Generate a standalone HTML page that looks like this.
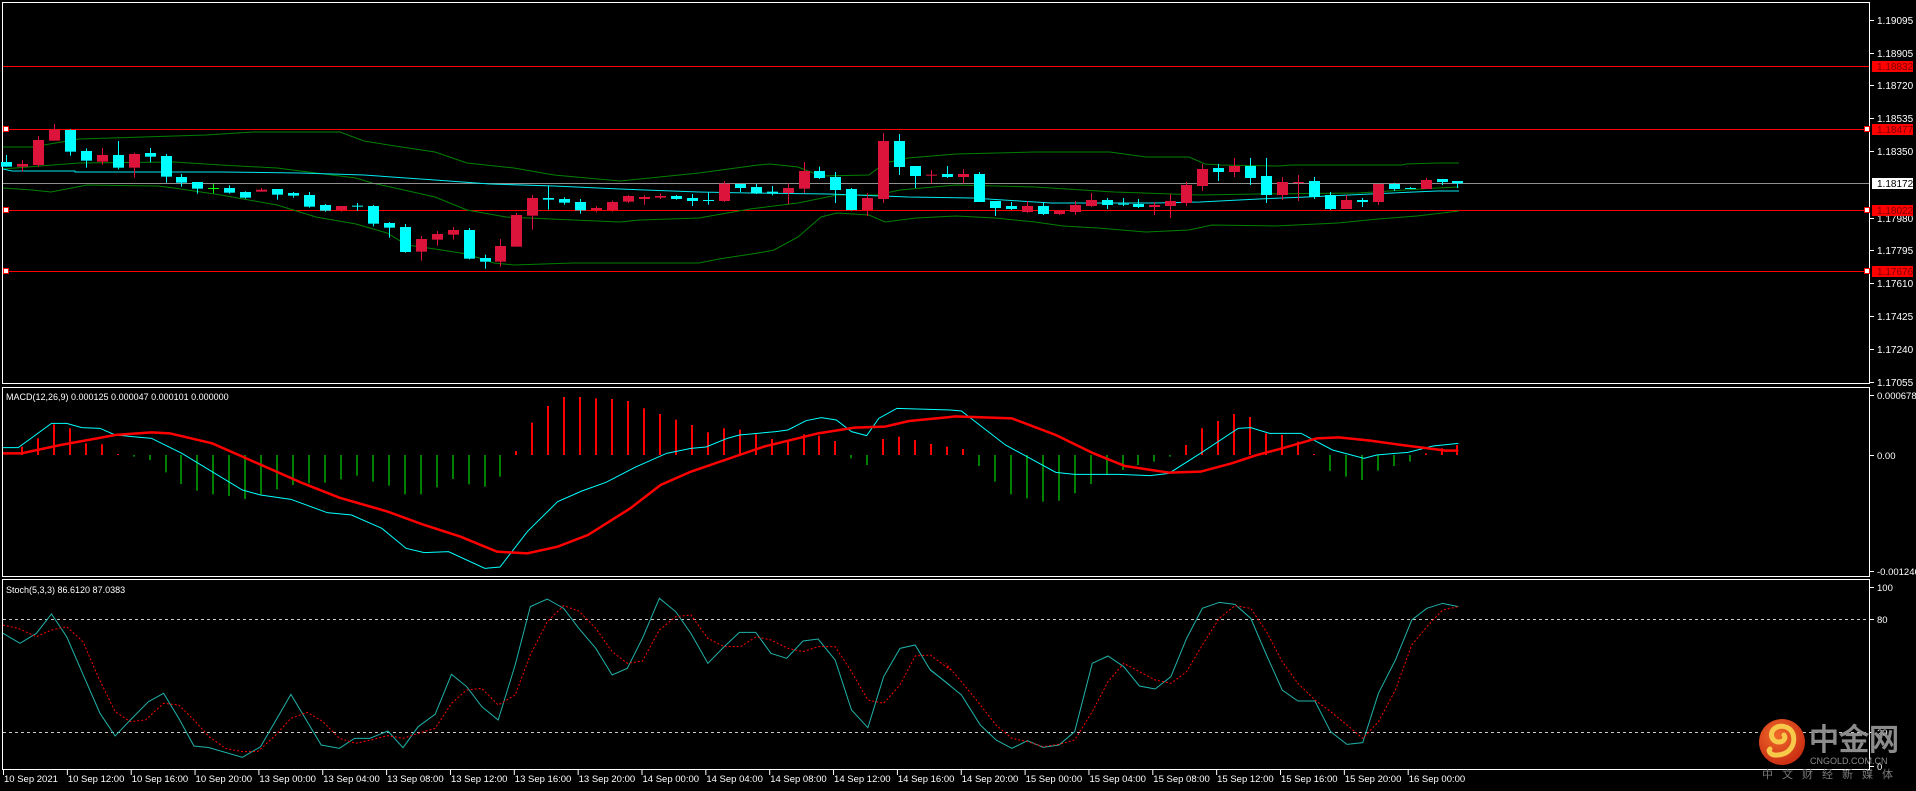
<!DOCTYPE html>
<html><head><meta charset="utf-8"><style>
html,body{margin:0;padding:0;background:#000;width:1916px;height:791px;overflow:hidden}
svg{display:block}
text{font-family:"Liberation Sans",sans-serif;}
</style></head><body>
<svg id="s" width="1916" height="791" xmlns="http://www.w3.org/2000/svg">
<rect width="1916" height="791" fill="#000"/>
<g id="g"></g>
<!-- logo -->
<defs><radialGradient id="lg" cx="0.4" cy="0.35" r="0.7"><stop offset="0" stop-color="#f06a2a"/><stop offset="1" stop-color="#c82a12"/></radialGradient></defs>
<circle cx="1782" cy="742" r="23" fill="url(#lg)"/>
<path d="M1774 755 C1790 756 1796 744 1793 734 C1790 726 1780 724 1774 729 C1769 734 1772 742 1779 742 C1784 742 1786 738 1784 735 M1774 755 C1770 754 1768 751 1770 749" stroke="#f7c94a" stroke-width="5" fill="none" stroke-linecap="round"/>
<text x="1809" y="750" font-size="30" font-weight="bold" fill="#8c8c8c" font-family="'Noto Sans CJK SC',sans-serif">中金网</text>
<text x="1810" y="764" font-size="9" fill="#8c8c8c">CNGOLD.COM.CN</text>
<text x="1762" y="778" font-size="11" fill="#7a7a7a" letter-spacing="9" font-family="'Noto Sans CJK SC',sans-serif">中文财经新媒体</text>
</svg>
<script>
var g=document.getElementById('g'),h='';
function L(x1,y1,x2,y2,c,w,extra){h+='<line x1="'+x1+'" y1="'+y1+'" x2="'+x2+'" y2="'+y2+'" stroke="'+c+'" stroke-width="'+(w||1)+'" '+(extra||'')+'/>';}
function R(x,y,w,hh,c){h+='<rect x="'+x+'" y="'+y+'" width="'+w+'" height="'+hh+'" fill="'+c+'"/>';}
function T(x,y,s,c,sz,anc){h+='<text x="'+x+'" y="'+y+'" fill="'+c+'" font-size="'+(sz||10)+'"'+(anc?' text-anchor="'+anc+'"':'')+'>'+s+'</text>';}
function P(pts,c,w,extra){h+='<polyline points="'+pts.map(function(p){return p[0]+','+p[1]}).join(' ')+'" fill="none" stroke="'+c+'" stroke-width="'+w+'" '+(extra||'')+'/>';}
var W='#ffffff';
// pane borders
h+='<rect x="2.5" y="2.5" width="1867" height="381" fill="none" stroke="#fff"/>';
h+='<rect x="2.5" y="387.5" width="1867" height="189" fill="none" stroke="#fff"/>';
h+='<rect x="2.5" y="579.5" width="1867" height="190" fill="none" stroke="#fff"/>';
// red lines
[[66,0],[129,1],[210,1],[271,1]].forEach(function(a){L(3,a[0]+.5,1869,a[0]+.5,'#ff0000',1);
 if(a[1]){R(3,a[0]-3,6,6,'#ff0000');R(4,a[0]-2,4,4,'#fff');R(1864,a[0]-3,6,6,'#ff0000');R(1865,a[0]-2,4,4,'#fff');}});
// price axis
[[20,'1.19095'],[53,'1.18905'],[85,'1.18720'],[118,'1.18535'],[151,'1.18350'],[218,'1.17980'],[250,'1.17795'],[283,'1.17610'],[316,'1.17425'],[349,'1.17240'],[382,'1.17055']].forEach(function(a){L(1870,a[0]+.5,1874,a[0]+.5,W);T(1877,a[0]+4,a[1],W,10);});
[[66,'1.18832'],[129,'1.18477'],[210,'1.18022'],[271,'1.17676']].forEach(function(a){R(1872,a[0]-5,41,11,'#ff0000');T(1877,a[0]+4,a[1],'#7a0000',10);});
R(1872,178,41,11,'#fff');T(1877,187,'1.18172','#000',10);
// bands
function cv(arr){return arr;}
P([[3,147],[32,147],[79,139],[206,135],[253,132],[340,132],[364,141],[395,146],[435,152],[467,163],[514,168],[554,175],[620,181],[640,179],[699,173],[758,165],[770,164],[798,167],[821,176],[869,175],[885,163],[908,158],[956,154],[1035,152],[1110,152],[1146,157],[1189,157],[1205,164],[1220,165],[1279,166],[1291,165],[1402,165],[1406,164],[1437,163],[1459,163]],'#008000',1);
P([[3,188],[32,190],[51,192],[87,185],[158,186],[174,188],[221,195],[277,205],[316,217],[356,224],[387,233],[407,245],[435,249],[467,254],[494,263],[514,265],[573,263],[636,263],[699,263],[719,259],[758,253],[774,250],[798,237],[821,217],[837,213],[869,215],[885,222],[916,218],[956,216],[995,218],[1035,222],[1063,226],[1098,228],[1146,232],[1189,230],[1212,225],[1275,226],[1338,223],[1378,219],[1417,216],[1459,211]],'#008000',1);
P([[3,169],[40,166],[79,163],[174,162],[221,165],[277,168],[316,173],[356,178],[372,183],[395,188],[435,197],[467,210],[506,217],[620,222],[640,220],[699,218],[750,209],[798,203],[837,195],[877,195],[900,190],[956,185],[1035,187],[1114,192],[1200,195],[1259,194],[1358,193],[1437,188],[1459,187]],'#008000',1);
L(3,183.5,1869,183.5,'#909090',1);
P([[3,169],[12,171],[75,171],[75,172],[221,172],[300,173],[364,175],[435,180],[490,184],[554,186],[620,189],[699,192],[750,193],[829,194],[908,197],[972,198],[1019,201],[1051,203],[1154,203],[1200,202],[1259,199],[1307,197],[1370,194],[1437,191],[1459,191]],'#00e8f0',1);
// candles [bt,bb,wt,wb,c]
var C=[[126,140,105,140,'c'],[132,140,120,155,'r'],[60,135,48,140,'r'],[28,62,12,62,'r'],[30,95,28,107,'c'],[93,122,85,143,'c'],[105,125,84,134,'r'],[105,143,63,148,'c'],[102,143,98,173,'r'],[99,110,84,127,'c'],[108,170,102,188,'c'],[171,188,162,200,'c'],[186,206,186,221,'c'],[204,206,192,220,'g'],[204,218,196,221,'c'],[216,233,214,236,'c'],[209,215,204,215,'r'],[207,224,207,239,'c'],[219,227,216,233,'c'],[225,260,216,263,'c'],[255,272,252,275,'c'],[258,270,258,275,'r'],[257,260,249,272,'c'],[258,311,255,319,'c'],[309,323,306,353,'c'],[321,396,312,398,'c'],[357,395,348,422,'r'],[342,359,333,377,'r'],[330,344,321,359,'r'],[330,416,324,418,'c'],[414,425,404,446,'c'],[378,425,357,440,'r'],[285,380,279,380,'r'],[234,287,225,329,'r'],[234,239,197,269,'c'],[237,248,232,254,'c'],[246,271,237,281,'c'],[264,270,258,277,'r'],[246,270,242,275,'r'],
[228,245,225,249,'r'],[231,237,226,254,'r'],[228,233,220,237,'r'],[228,237,225,239,'c'],[234,243,222,258,'c'],[240,243,217,254,'c'],[191,243,183,246,'r'],[192,204,192,216,'c'],[201,220,192,222,'c'],[215,221,198,226,'c'],[204,219,190,252,'r'],[153,206,126,219,'r'],[153,174,140,177,'c'],[171,210,156,249,'c'],[207,270,204,272,'c'],[234,270,220,288,'r'],[63,237,39,249,'r'],[63,141,42,165,'c'],[138,168,138,204,'c'],[164,167,150,190,'r'],[162,171,138,174,'c'],[162,171,147,190,'r'],[162,246,156,246,'c'],[243,264,243,288,'c'],[258,267,246,270,'c'],[258,276,243,279,'r'],[258,282,246,285,'c'],[272,282,272,285,'r'],[255,276,243,285,'r'],[240,258,219,261,'r'],[240,255,234,267,'c'],[251,254,234,258,'c'],[252,261,237,264,'c'],[255,261,246,285,'r'],[243,258,222,294,'r'],[195,249,186,258,'r'],[147,198,132,213,'r'],
[144,156,132,183,'c'],[138,156,114,171,'r'],[138,174,114,195,'c'],[168,225,114,249,'c'],[186,225,171,240,'r'],[186,189,165,243,'r'],[183,231,171,237,'c'],[225,267,216,270,'c'],[240,267,225,267,'r'],[240,246,234,261,'c'],[192,246,192,255,'r'],[192,207,189,213,'c'],[204,207,201,207,'c'],[180,207,174,207,'r'],[177,186,177,195,'c'],[183,190,183,204,'c']];
var col={c:'#00ffff',r:'#dc143c',g:'#00ff00'};
C.forEach(function(d,i){var x=Math.round(6+i*15.95),cc=col[d[4]];
 var bt=120+d[0]/3,bb=120+d[1]/3,wt=120+d[2]/3,wb=120+d[3]/3;
 R(x,wt,1,Math.max(1,wb-wt),cc);
 R(x-5,bt,11,Math.max(1,bb-bt),cc);});
// MACD
var Hs=[[1,185],[2,160],[3,118],[4,130],[5,175],[6,178],[7,207],[8,215],[9,225],[10,262],[11,297],[12,317],[13,328],[14,333],[15,342],[16,328],[17,313],[18,300],[19,295],[20,293],[21,283],[22,272],[23,290],[24,302],[25,328],[26,328],[27,307],[28,282],[29,298],[30,305],[31,275],[32,198],[33,113],[34,63],[35,36],[36,36],[37,40],[38,42],[39,48],[40,70],[41,87],[42,104],[43,120],[44,142],[45,130],[46,134],[47,148],[48,162],[49,165],[50,148],[51,152],[52,168],[53,220],[54,240],[55,162],[56,155],[57,165],[58,177],[59,185],[60,192],[61,243],[62,290],[63,328],[64,340],[65,350],[66,347],[67,325],[68,297],[69,270],[70,255],[71,240],[72,230],[73,215],[74,180],[75,130],[76,108],[77,87],[78,96],[79,145],[80,150],[81,170],[82,207],[83,258],[84,275],[85,285],[86,257],[87,243],[88,230],[89,205],[90,190],[91,180]];
Hs.forEach(function(a){var x=Math.round(6+a[0]*15.95),y=385+a[1]/3,z=455;var c=y<z?'#ff0000':'#008000';if(Math.abs(y-z)<1)y=z+(c=='#ff0000'?-1:1);R(x-1,Math.min(y,z),2,Math.abs(z-y),c);});
function m7(a){return a.map(function(p){return [p[0]/1.65,385+p[1]/3]});}
function m8(a){return a.map(function(p){return [930+p[0]/1.59,385+p[1]/3]});}
P(m7([[5,188],[30,188],[85,115],[110,115],[135,128],[165,130],[190,150],[250,160],[300,205],[350,260],[400,315],[430,330],[480,343],[540,383],[580,390],[630,430],[670,490],[700,503],[740,500],[800,550],[825,546],[870,440],[920,350],[960,318],[1000,292],[1050,245],[1100,205],[1140,190],[1165,186],[1200,160],[1220,150],[1280,140],[1300,135],[1330,107],[1355,98],[1380,105],[1405,140],[1430,152],[1450,100],[1480,70],[1568,75]]).concat(m8([[50,78],[120,180],[200,262],[230,268],[300,268],[350,272],[380,265],[430,205],[490,130],[510,128],[540,145],[590,145],[640,195],[690,220],[710,210],[760,202],[800,183],[840,175]])),'#00ffff',1);
P(m7([[5,205],[35,205],[100,180],[160,160],[190,150],[250,142],[280,145],[350,175],[400,215],[450,255],[500,295],[560,338],[640,380],[700,420],[760,455],[820,500],[870,505],[920,485],[970,450],[1040,370],[1090,300],[1140,260],[1220,210],[1260,185],[1350,145],[1410,128],[1460,125],[1500,108],[1568,96]]).concat(m8([[40,94],[130,100],[200,150],[260,205],[310,243],[380,263],[430,260],[480,235],[520,210],[560,190],[615,160],[650,157],[700,167],[750,180],[800,192],[820,197],[840,197]])),'#ff0000',2.5);
T(6,400,'MACD(12,26,9) 0.000125 0.000047 0.000101 0.000000',W,9);
[[395,'0.000678'],[455,'0.00'],[571,'-0.001246']].forEach(function(a){L(1870,a[0]+.5,1874,a[0]+.5,W);T(1877,a[0]+4,a[1],W,9.5);});
// Stoch
L(3,619.5,1869,619.5,'#c8c8c8',1,'stroke-dasharray="3,3"');
L(3,732.5,1869,732.5,'#c8c8c8',1,'stroke-dasharray="3,3"');
function s9(a){return a.map(function(p){return [p[0]/1.65,575+p[1]/3]});}
function s10(a){return a.map(function(p){return [930+p[0]/1.59,575+p[1]/3]});}
P(s9([[5,175],[33,205],[60,175],[85,117],[110,185],[135,290],[165,415],[190,483],[215,435],[245,380],[270,355],[295,430],[320,513],[345,518],[400,547],[430,515],[480,358],[530,510],[560,520],[585,490],[610,490],[640,468],[665,518],[690,455],[718,418],[745,298],[770,335],[795,395],[822,435],[850,270],[875,95],[903,72],[930,100],[955,160],[983,220],[1010,300],[1035,280],[1060,190],[1088,70],[1115,110],[1140,175],[1168,265],[1195,215],[1220,172],[1247,172],[1272,235],[1298,250],[1325,198],[1350,192],[1378,255],[1405,405],[1432,458],[1458,305],[1485,220],[1510,210],[1535,285],[1568,332]]).concat(s10([[0,283],[50,360],[80,450],[105,495],[130,520],[155,497],[180,517],[205,510],[230,470],[258,265],[283,243],[308,275],[333,333],[358,342],[383,305],[408,190],[433,100],[460,82],[485,88],[510,130],[535,240],[560,345],[585,378],[612,378],[637,470],[663,508],[688,503],[713,355],[740,255],[766,135],[790,100],[815,85],[840,95]])),'#20b2aa',1);
P(s9([[5,150],[30,160],[60,185],[85,165],[110,155],[137,200],[163,310],[190,410],[215,440],[240,435],[270,385],[295,390],[320,435],[345,485],[372,520],[400,530],[425,530],[455,480],[480,430],[507,412],[533,440],[560,490],[587,505],[612,495],[640,482],[665,490],[690,475],[718,460],[745,385],[770,345],[795,340],[822,390],[850,360],[875,240],[903,140],[930,92],[955,108],[983,160],[1010,230],[1035,265],[1060,258],[1088,165],[1115,125],[1140,120],[1168,190],[1195,215],[1222,215],[1248,185],[1272,195],[1300,220],[1325,230],[1350,215],[1378,215],[1405,290],[1432,375],[1458,385],[1485,330],[1510,243],[1535,240],[1568,285]]).concat(s10([[25,265],[50,320],[78,385],[105,450],[130,490],[155,500],[180,515],[205,508],[230,495],[258,410],[283,320],[308,265],[333,290],[358,315],[383,325],[408,290],[433,210],[460,130],[485,92],[510,100],[535,170],[560,260],[585,325],[612,375],[637,410],[663,450],[688,490],[713,440],[740,345],[766,210],[790,155],[815,105],[840,95]])),'#ff0000',1,'stroke-dasharray="2,2"');
T(6,593,'Stoch(5,3,3) 86.6120 87.0383',W,9);
[[587,'100'],[619,'80'],[732,'20'],[766,'0']].forEach(function(a){L(1870,a[0]+.5,1874,a[0]+.5,W);T(1877,a[0]+4,a[1],W,9.5);});
// time axis
var labs=['10 Sep 2021','10 Sep 12:00','10 Sep 16:00','10 Sep 20:00','13 Sep 00:00','13 Sep 04:00','13 Sep 08:00','13 Sep 12:00','13 Sep 16:00','13 Sep 20:00','14 Sep 00:00','14 Sep 04:00','14 Sep 08:00','14 Sep 12:00','14 Sep 16:00','14 Sep 20:00','15 Sep 00:00','15 Sep 04:00','15 Sep 08:00','15 Sep 12:00','15 Sep 16:00','15 Sep 20:00','16 Sep 00:00'];
labs.forEach(function(s,k){var x=3+k*63.85;L(x+.5,770,x+.5,775,W);T(x+1,782,s,W,9.5);});
g.innerHTML=h;
</script>
</body></html>
